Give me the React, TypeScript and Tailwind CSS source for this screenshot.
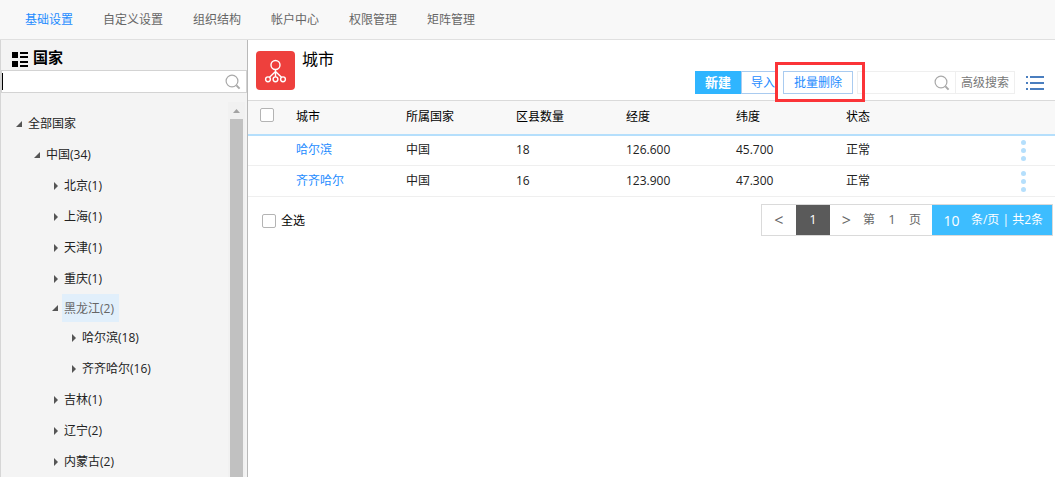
import { useState } from "react";
import clsx from "clsx";

const tabs = ["基础设置", "自定义设置", "组织结构", "帐户中心", "权限管理", "矩阵管理"];

type TreeNode = {
  label: string;
  level: number;
  open?: boolean;
};

const tree: TreeNode[] = [
  { label: "全部国家", level: 0, open: true },
  { label: "中国(34)", level: 1, open: true },
  { label: "北京(1)", level: 2 },
  { label: "上海(1)", level: 2 },
  { label: "天津(1)", level: 2 },
  { label: "重庆(1)", level: 2 },
  { label: "黑龙江(2)", level: 2, open: true },
  { label: "哈尔滨(18)", level: 3 },
  { label: "齐齐哈尔(16)", level: 3 },
  { label: "吉林(1)", level: 2 },
  { label: "辽宁(2)", level: 2 },
  { label: "内蒙古(2)", level: 2 },
];

const indents = ["pl-[15px]", "pl-[33px]", "pl-[51px]", "pl-[69px]"];

const columns = ["城市", "所属国家", "区县数量", "经度", "纬度", "状态"];

const cities = [
  { name: "哈尔滨", country: "中国", count: 18, lng: "126.600", lat: "45.700", status: "正常" },
  { name: "齐齐哈尔", country: "中国", count: 16, lng: "123.900", lat: "47.300", status: "正常" },
];

const SearchIcon = () => (
  <svg width="16" height="16" viewBox="0 0 16 16" fill="none" stroke="#a9a9a9">
    <circle cx="7" cy="7" r="5.9" strokeWidth="1.2" />
    <path d="M11.4 11.4l3.2 3.2" strokeWidth="2" />
  </svg>
);

const Checkbox = ({ label }: { label: string }) => (
  <input
    type="checkbox"
    aria-label={label}
    className="block h-[14px] w-[14px] shrink-0 appearance-none rounded-[2px] border border-[#b4b4b4] bg-white checked:bg-[#2fb5ff]"
  />
);

const TreeItem = ({
  node,
  selected,
  onSelect,
}: {
  node: TreeNode;
  selected: boolean;
  onSelect: () => void;
}) => (
  <li className={clsx("flex items-center", indents[node.level], selected ? "h-7" : "h-[31px]")}>
    <svg width="8" height="8" viewBox="0 0 8 8" fill="#555" className="shrink-0">
      {node.open ? <path d="M6 1v6H0z" /> : <path d="M2 0l4 4-4 4z" />}
    </svg>
    <button
      type="button"
      onClick={onSelect}
      className={clsx(
        "ml-[2px] h-7 pl-[2px] pr-[5px]",
        selected ? "bg-[#e1effb] pt-px text-[#666]" : "text-[#222]"
      )}
    >
      {node.label}
    </button>
  </li>
);

const Sidebar = () => {
  const [keyword, setKeyword] = useState("");
  const [selected, setSelected] = useState("黑龙江(2)");

  return (
    <aside className="flex w-[248px] shrink-0 flex-col border-l border-r border-l-[#d6d6d6] border-r-[#b9b9b9] bg-[#f4f4f4]">
      <div className="flex h-[30px] items-center gap-[5px] pl-[11px]">
        <svg width="16" height="15" viewBox="0 0 16 15" fill="#000" className="mt-2">
          <path d="M0 0h6v6H0zM0 9h6v6H0zM8 0h8v2H8zM8 4h8v2H8zM8 9h8v2H8zM8 13h8v2H8z" />
        </svg>
        <h2 className="pt-1 text-[15px] leading-5 font-bold text-black">国家</h2>
      </div>

      <label className="relative flex h-[23px] items-center border border-[#d3d3d3] bg-white pr-[5px]">
        <input
          value={keyword}
          onChange={(e) => setKeyword(e.target.value)}
          aria-label="国家"
          className="min-w-0 flex-1 px-1 outline-none"
        />
        {!keyword && <span className="absolute top-[2px] left-0 h-[17px] w-px bg-black" />}
        <SearchIcon />
      </label>

      <div className="mt-[9px] flex flex-1">
        <ul className="flex-1 pt-[6px]">
          {tree.map((node) => (
            <TreeItem
              key={node.label}
              node={node}
              selected={node.label === selected}
              onSelect={() => setSelected(node.label)}
            />
          ))}
        </ul>
        <div className="flex w-[17px] flex-col bg-[#f1f1f1] pr-[2px] pl-[2px]">
          <div className="flex h-[17px] items-center justify-center">
            <svg width="7" height="4" viewBox="0 0 7 4" fill="#a3a3a3">
              <path d="M3.5 0L7 4H0z" />
            </svg>
          </div>
          <div className="flex-1 bg-[#c1c1c1]" />
        </div>
        <div className="w-[2px]" />
      </div>
    </aside>
  );
};

const Toolbar = () => (
  <div className="mt-[31px] flex h-[23px] items-stretch">
    <button type="button" className="w-[46px] bg-[#2fb5ff] text-[13px] font-bold text-white">
      新建
    </button>
    <button
      type="button"
      className="mr-2 border border-r-0 border-[#a9cbf0] pl-[9px] text-[#1e8cff]"
    >
      导入
    </button>
    <div className="relative flex">
      <button type="button" className="border border-[#a9cbf0] px-[10px] text-[#1e8cff]">
        批量删除
      </button>
      <div className="pointer-events-none absolute -top-[9px] -right-3 -bottom-2 -left-2 border-[3px] border-[#fb3438]" />
    </div>
    <label className="ml-1 flex w-[99px] items-center border border-[#efefef] pr-[5px]">
      <input aria-label="搜索" className="min-w-0 flex-1 px-1 outline-none" />
      <SearchIcon />
    </label>
    <button type="button" className="border border-l-0 border-[#efefef] px-[5px] text-[#777]">
      高级搜索
    </button>
    <button type="button" aria-label="列表" className="ml-[11px]">
      <svg width="18" height="14" viewBox="0 0 18 14" fill="#4a7ebf">
        <path d="M0 0h2v2H0zM4 0h14v2H4zM0 6h2v2H0zM4 6h14v2H4zM0 12h2v2H0zM4 12h14v2H4z" />
      </svg>
    </button>
  </div>
);

const CityTable = () => (
  <table className="w-full table-fixed text-left">
    <thead>
      <tr className="h-[34px] border-t border-b-2 border-t-[#dadada] border-b-[#b5dffc] bg-[#f8f8f8] text-black">
        <th className="w-12 pb-1 pl-3">
          <Checkbox label="全选" />
        </th>
        {columns.map((column) => (
          <th key={column} className="w-[13.63%] font-normal">
            {column}
          </th>
        ))}
        <th aria-label="操作" />
      </tr>
    </thead>
    <tbody>
      {cities.map((city) => (
        <tr key={city.name} className="h-[31px] border-b border-[#efefef] text-[#222]">
          <td />
          <td>
            <a href="#" className="text-[#1e8cff]">
              {city.name}
            </a>
          </td>
          <td>{city.country}</td>
          <td>{city.count}</td>
          <td>{city.lng}</td>
          <td>{city.lat}</td>
          <td>{city.status}</td>
          <td className="pr-[29px]">
            <button type="button" aria-label="更多" className="ml-auto flex flex-col gap-[3px]">
              <span className="h-[5px] w-[5px] rounded-full bg-[#b5dffc]" />
              <span className="h-[5px] w-[5px] rounded-full bg-[#b5dffc]" />
              <span className="h-[5px] w-[5px] rounded-full bg-[#b5dffc]" />
            </button>
          </td>
        </tr>
      ))}
    </tbody>
  </table>
);

const Pagination = () => (
  <nav className="flex h-8 items-stretch border border-[#dadada] text-[#666]">
    <button type="button" aria-label="上一页" className="w-[34px] text-base">
      &lt;
    </button>
    <button type="button" className="w-[34px] bg-[#5a5a5a] text-[13px] text-white">
      1
    </button>
    <button type="button" aria-label="下一页" className="w-[33px] text-base">
      &gt;
    </button>
    <label className="flex items-center pr-[11px]">
      第
      <input defaultValue="1" aria-label="页码" className="w-[34px] text-center text-[13px] outline-none" />
      页
    </label>
    <div className="flex items-center bg-[#3dbdff] pr-[9px] text-white">
      <input
        defaultValue="10"
        aria-label="每页条数"
        className="w-[39px] pt-[2px] text-center text-sm outline-none"
      />
      <span>条/页 | 共2条</span>
    </div>
  </nav>
);

const App = () => {
  const [tab, setTab] = useState(tabs[0]);

  return (
    <div className="flex min-h-screen flex-col bg-white font-['Open_Sans','Noto_Sans_CJK_SC',sans-serif] text-xs">
      <header className="flex h-10 items-center gap-[30px] border-b border-[#e0e0e0] bg-[#f8f8f8] pl-[25px]">
        {tabs.map((name) => (
          <button
            key={name}
            type="button"
            onClick={() => setTab(name)}
            className={name === tab ? "text-[#1e8cff]" : "text-[#666]"}
          >
            {name}
          </button>
        ))}
      </header>

      <div className="flex flex-1">
        <Sidebar />

        <main className="min-w-0 flex-1">
          <div className="flex h-[60px] justify-between pr-[11px] pl-2">
            <div className="flex gap-[7px]">
              <svg width="39" height="39" viewBox="0 0 39 39" fill="none" className="mt-[11px]">
                <rect width="39" height="39" rx="4" fill="#ee403d" />
                <g stroke="#fff" strokeWidth="1.4">
                  <circle cx="19.5" cy="14" r="4.5" />
                  <circle cx="12" cy="28.3" r="2.4" />
                  <circle cx="19.5" cy="28.3" r="2.4" />
                  <circle cx="27" cy="28.3" r="2.4" />
                  <path d="M19.5 18.5V26M19.5 20.5L13.5 26.3M19.5 20.5l6 5.8" />
                </g>
              </svg>
              <h1 className="mt-[7px] text-base text-black">城市</h1>
            </div>
            <Toolbar />
          </div>

          <CityTable />

          <div className="flex items-start justify-between pt-[7px] pr-[2px] pl-[14px]">
            <label className="mt-[9px] flex items-center gap-[5px] text-black">
              <Checkbox label="全选" />
              全选
            </label>
            <Pagination />
          </div>
        </main>
      </div>
    </div>
  );
};

export default App;
